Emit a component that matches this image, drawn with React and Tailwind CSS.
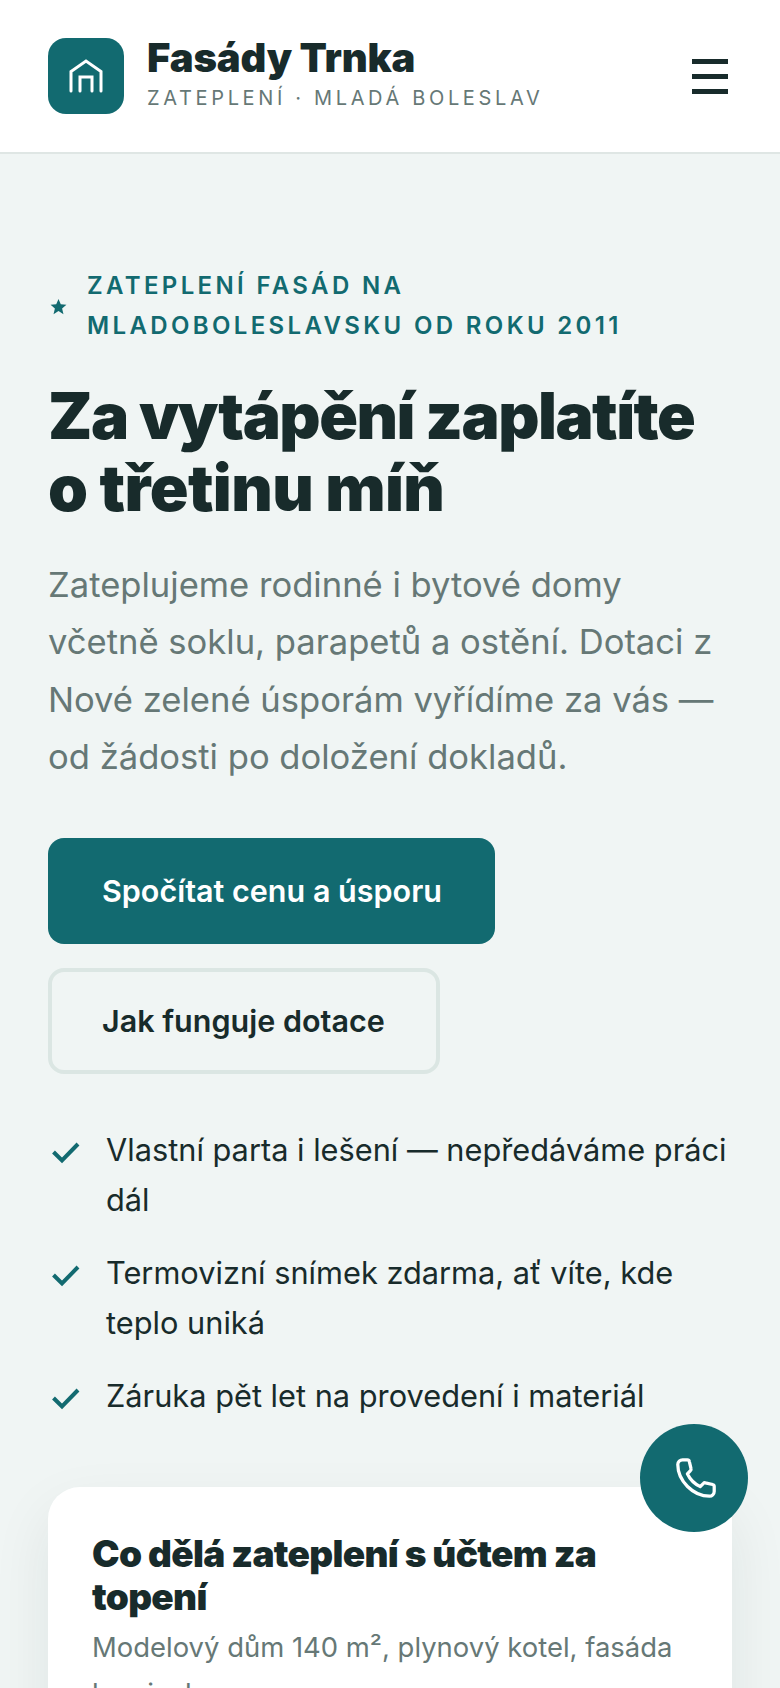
import React from "react";

const checks = [
  "Vlastní parta i lešení — nepředáváme práci dál",
  "Termovizní snímek zdarma, ať víte, kde teplo uniká",
  "Záruka pět let na provedení i materiál",
];

const App = () => {
  return (
    <div className="relative h-[1688px] overflow-hidden bg-[#f0f5f4] font-['Inter',sans-serif] text-[#182b2b]">
      <header className="flex h-[154px] items-center justify-between border-b-2 border-[#dfe6e4] bg-white pl-12 pr-[52px]">
        <div className="flex items-center gap-[23px]">
          <div className="flex h-[76px] w-[76px] items-center justify-center rounded-[18px] bg-[#126a70]">
            <svg width="36" height="36" viewBox="0 0 36 36" fill="none" stroke="#fff" strokeWidth="3" strokeLinecap="round" strokeLinejoin="miter">
              <path d="M3 33V13.500L18 3l15 10.500V33" />
              <path d="M12 33V19h12v14" />
            </svg>
          </div>
          <div className="mb-[8px]">
            <div className="text-[40px] leading-[46px] font-black tracking-[-0.2px]">Fasády Trnka</div>
            <div className="mt-[5px] text-[20px] leading-6 tracking-[3.65px] text-[#667876]">ZATEPLENÍ · MLADÁ BOLESLAV</div>
          </div>
        </div>
        <div className="flex w-[36px] flex-col gap-[10px]">
          <div className="h-[5px] bg-[#182b2b]" />
          <div className="h-[5px] bg-[#182b2b]" />
          <div className="h-[5px] bg-[#182b2b]" />
        </div>
      </header>

      <main className="px-12 pt-[112px]">
        <div className="flex items-center gap-5 text-[#126a70]">
          <svg className="ml-[2px]" width="17" height="17" viewBox="0 0 24 24" fill="#126a70">
            <path d="M12 1.500l3.200 7.400 8 .7-6.100 5.300 1.900 7.900L12 18.200l-7 4.600 1.900-7.900L.8 9.600l8-.7z" />
          </svg>
          <div className="text-[24px] leading-[40px] font-semibold tracking-[3.36px]">
            ZATEPLENÍ FASÁD NA<br />MLADOBOLESLAVSKU OD ROKU 2011
          </div>
        </div>

        <h1 className="mt-[34px] text-[64px] leading-[72px] font-black tracking-[-1.5px]">
          Za vytápění zaplatíte<br /><span className="tracking-[-0.6px]">o třetinu míň</span>
        </h1>

        <p className="mt-[32px] text-[34.6px] leading-[57.4px] text-[#667876]">
          Zateplujeme rodinné i bytové domy včetně soklu, parapetů a ostění. Dotaci z Nové zelené úsporám vyřídíme za vás — od žádosti po doložení dokladů.
        </p>

        <div className="mt-[52px] flex flex-col items-start gap-6">
          <button className="h-[106px] rounded-[16px] bg-[#126a70] pr-[53px] pl-[54px] text-[30.5px] font-semibold text-white">Spočítat cenu a úsporu</button>
          <button className="h-[106px] rounded-[16px] border-4 border-[#dbe6e3] pr-[51px] pl-[50px] text-[30.5px] font-semibold">Jak funguje dotace</button>
        </div>

        <ul className="mt-[51px] flex flex-col gap-[22px]">
          {checks.map((item) => (
            <li key={item} className="flex items-start gap-[26px] text-[30.75px] leading-[50.6px]">
              <svg className="mt-[12px] shrink-0" width="32" height="32" viewBox="0 0 32 32" fill="none" stroke="#126a70" strokeWidth="4">
                <path d="M5.500 15l8.500 8.500L30 7" />
              </svg>
              <span>{item}</span>
            </li>
          ))}
        </ul>

        <section className="mt-[65px] rounded-[32px] bg-white px-11 pt-[45px] pb-10 shadow-[0_24px_60px_rgba(24,43,43,0.08)]">
          <h2 className="text-[37px] leading-[43px] font-black tracking-[-0.7px]">Co dělá zateplení s účtem za topení</h2>
          <p className="mt-[6px] text-[27.45px] leading-[46px] text-[#667876]">Modelový dům 140 m², plynový kotel, fasáda bez izolace.</p>
        </section>
      </main>

      <button className="absolute top-[1424px] right-8 flex h-[108px] w-[108px] items-center justify-center rounded-full bg-[#126a70]">
        <svg className="ml-[3px]" width="46" height="46" viewBox="0 0 24 24" fill="none" stroke="#fff" strokeWidth="1.700" strokeLinecap="round" strokeLinejoin="round">
          <path d="M5 2.500h2.500a1 1 0 0 1 1 .8l.9 3.800a1 1 0 0 1-.3 1L7.500 9.800a14 14 0 0 0 6.700 6.700l1.700-1.700a1 1 0 0 1 1-.3l3.800.9a1 1 0 0 1 .8 1V19a2.500 2.500 0 0 1-2.500 2.500C10.500 21.500 2.500 13.500 2.500 5A2.500 2.500 0 0 1 5 2.500z" />
        </svg>
      </button>
    </div>
  );
};

export default App;
